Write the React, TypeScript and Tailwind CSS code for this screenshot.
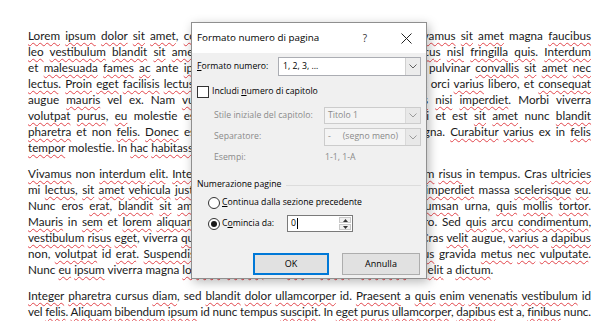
import { Fragment } from 'react';

// words Word's checker did not flag
const known = new Set([
  'et', 'ante', 'in', 'non', 'est', 'ex', 'a', 'magna', 'libero', 'orci', 'morbi', 'viverra',
  'nunc', 'molestie', 'nam', 'id', 'mi', 'eros', 'massa', 'urna', 'gravida', 'sed', 'pulvinar',
  'cursus', 'tempus', 'cras', 'augue', 'ut', 'at', 'vel',
]);

// each line: [text, tight?]
const paragraphs: [string, boolean?][][] = [
  [
    ['Lorem ipsum dolor sit amet, consectetur adipiscing elit. Etiam eu urna. Vivamus sit amet magna faucibus'],
    ['leo vestibulum blandit sit amet nec neque. Aenean vel tortor eget rhoncus nisl fringilla quis. Interdum'],
    ['et malesuada fames ac ante ipsum primis in faucibus. Phasellus ut mi est pulvinar convallis sit amet nec'],
    ['lectus. Proin eget facilisis lectus. Maecenas at ultrices turpis, ut dignissim sit orci varius libero, et consequat'],
    ['augue mauris vel ex. Nam vulputate, elit in efficitur lacinia, a dui risus nisi imperdiet. Morbi viverra'],
    ['volutpat purus, eu molestie est ultrices sed. Etiam tincidunt ligula, morbi et est sit amet nunc blandit'],
    ['pharetra et non felis. Donec est lacus, hendrerit in tincidunt et, mollis magna. Curabitur varius ex in felis'],
    ['tempor molestie. In hac habitasse platea dictumst.'],
  ],
  [
    ['Vivamus non interdum elit. Integer sit amet nisl et lorem dictum, ut bibendum risus in tempus. Cras ultricies'],
    ['mi lectus, sit amet vehicula justo ut nibh. Nam eget tellus nec, a porta nisl imperdiet massa scelerisque eu.'],
    ['Nunc eros erat, blandit sit amet dictum vel, placerat at ipsum. Nulla accumsan urna, quis mollis tortor.'],
    ['Mauris in sem et lorem aliquam laoreet. Aliquam erat volutpat. Ut nec libero. Sed quis arcu condimentum,'],
    ['vestibulum risus eget, viverra quam. Fusce sed lorem sit amet nunc pretium. Cras velit augue, varius a dapibus'],
    ['non, volutpat id erat. Suspendisse potenti. Vestibulum at nisi ac nisl faucibus gravida metus nec vulputate.'],
    ['Nunc eu ipsum viverra magna lobortis. Integer sed nisl at lorem a tincidunt vel elit a dictum.'],
  ],
  [
    ['Integer pharetra cursus diam, sed blandit dolor ullamcorper id. Praesent a quis enim venenatis vestibulum id'],
    ['vel felis. Aliquam bibendum ipsum id nunc tempus suscipit. In eget purus ullamcorper, dapibus est a, finibus nunc.', true],
  ],
];

function Word({ w }: { w: string }) {
  const m = w.match(/^([A-Za-z]+)(.*)$/);
  if (!m || known.has(m[1].toLowerCase())) return <>{w}</>;
  return (
    <>
      <span className="underline decoration-wavy decoration-[#e2454b] decoration-[1.2px] underline-offset-[2px]">{m[1]}</span>
      {m[2]}
    </>
  );
}

function Line({ text, last, tight }: { text: string; last: boolean; tight?: boolean }) {
  let cls = 'h-4 text-justify [text-align-last:justify]';
  if (last) cls = 'h-4 whitespace-nowrap';
  if (tight) cls += ' tracking-[-0.1px] [word-spacing:-1.5px]';
  return (
    <div className={cls}>
      {text.split(' ').map((w, i) => (
        <Fragment key={i}>
          {i > 0 && ' '}
          <Word w={w} />
        </Fragment>
      ))}
    </div>
  );
}

function Chevron({ color = '#606060' }: { color?: string }) {
  return (
    <svg width="8" height="5" viewBox="0 0 8 5" fill="none">
      <path d="M0.5 0.5 L4 4 L7.5 0.5" stroke={color} strokeWidth="1" />
    </svg>
  );
}

function Select({ value, disabled, w }: { value: React.ReactNode; disabled?: boolean; w: string }) {
  return (
    <div
      className={`${w} flex h-full items-stretch border ${
        disabled ? 'border-[#cccccc] bg-[#f4f4f4] text-[#8a8a8a]' : 'border-[#abadb3] bg-white'
      }`}
    >
      <div className="flex flex-1 items-center pl-[3px]">{value}</div>
      <div
        className={`flex w-[15px] items-center justify-center border-l ${
          disabled ? 'border-[#d9d9d9] bg-[#e8e8e8]' : 'border-[#d0d0d0] bg-[#ececec]'
        }`}
      >
        <Chevron color={disabled ? '#9a9a9a' : '#606060'} />
      </div>
    </div>
  );
}

function Radio({ checked }: { checked?: boolean }) {
  return (
    <span className="flex h-[12px] w-[12px] items-center justify-center rounded-full border border-[#333] bg-white">
      {checked && <span className="h-[6px] w-[6px] rounded-full bg-[#1a1a1a]" />}
    </span>
  );
}

function PageNumberDialog() {
  return (
    <div className="absolute left-[191px] top-[22px] flex h-[257px] w-[236px] flex-col border border-[#8f8f8f] bg-[#f0f0f0] font-['Open_Sans',sans-serif] text-[8.7px] text-black shadow-[2px_3px_10px_rgba(0,0,0,0.28)]">
      {/* Title bar */}
      <div className="flex h-[30px] shrink-0 items-center bg-white pl-[5px]">
        <span className="text-[9.8px]">Formato numero di pagina</span>
        <span className="ml-auto mr-[16px] w-[20px] text-center text-[10px] text-[#333]">?</span>
        <span className="mr-[5px] flex w-[30px] justify-center">
          <svg width="11" height="11" viewBox="0 0 11 11">
            <path d="M0.5 0.5 L10.5 10.5 M10.5 0.5 L0.5 10.5" stroke="#222" strokeWidth="1" />
          </svg>
        </span>
      </div>

      <div className="flex flex-col px-[5px]">
        {/* Formato numero */}
        <div className="mt-[4px] flex h-[19px] items-center">
          <span className="w-[81px]">
            <span className="underline">F</span>ormato numero:
          </span>
          <Select w="w-[143px]" value={<span className="pl-[1px]">1, 2, 3, …</span>} />
        </div>

        {/* Includi numero di capitolo */}
        <div className="mt-[8px] flex h-[16px] items-center gap-[3px]">
          <span className="h-[12px] w-[12px] border border-[#333] bg-white" />
          <span>
            Includi <span className="underline">n</span>umero di capitolo
          </span>
        </div>

        <div className="text-[#8a8a8a]">
          <div className="mt-[7px] flex h-[17px] items-center pl-[17px]">
            <span className="w-[110px]">Stile iniziale del capitolo:</span>
            <Select disabled w="w-[97px]" value="Titolo 1" />
          </div>
          <div className="mt-[4px] flex h-[18px] items-center pl-[17px]">
            <span className="w-[110px]">Separatore:</span>
            <Select
              disabled
              w="w-[97px]"
              value={
                <span className="flex gap-[12px]">
                  <span>-</span>
                  <span>(segno meno)</span>
                </span>
              }
            />
          </div>
          <div className="mt-[4px] flex h-[16px] items-center pl-[17px]">
            <span className="w-[111px]">Esempi:</span>
            <span>1-1, 1-A</span>
          </div>
        </div>

        {/* Numerazione pagine */}
        <div className="mt-[11px] flex h-[16px] items-center gap-[5px]">
          <span>Numerazione pagine</span>
          <span className="h-px flex-1 bg-[#dcdcdc]" />
        </div>

        <div className="mt-[2px] flex h-[16px] items-center gap-[2px] pl-[11px]">
          <Radio />
          <span>
            <span className="underline">C</span>ontinua dalla sezione precedente
          </span>
        </div>

        <div className="mt-[4px] flex h-[17px] items-center pl-[11px]">
          <Radio checked />
          <span className="ml-[2px] w-[65px]">
            C<span className="underline">o</span>mincia da:
          </span>
          <div className="flex h-full w-[66px] border border-[#7a7a7a] bg-white">
            <div className="flex flex-1 items-center pl-[3px]">
              0<span className="ml-px h-[11px] w-px bg-black" />
            </div>
            <div className="flex w-[14px] flex-col gap-px p-px">
              <span className="flex flex-1 items-center justify-center border border-[#c8c8c8] bg-[#f0f0f0]">
                <svg width="5" height="3" viewBox="0 0 5 3">
                  <path d="M0 3 L2.5 0 L5 3 Z" fill="#333" />
                </svg>
              </span>
              <span className="flex flex-1 items-center justify-center border border-[#c8c8c8] bg-[#f0f0f0]">
                <svg width="5" height="3" viewBox="0 0 5 3">
                  <path d="M0 0 L2.5 3 L5 0 Z" fill="#333" />
                </svg>
              </span>
            </div>
          </div>
        </div>

        {/* Buttons */}
        <div className="mt-[21px] flex h-[22px] justify-end gap-[13px] pr-[1px]">
          <button className="w-[76px] border border-[#0078d7] bg-[#e1e1e1] text-[9px] shadow-[inset_0_0_0_1px_#0078d7]">OK</button>
          <button className="w-[78px] border border-[#adadad] bg-[#e1e1e1] text-[9px]">Annulla</button>
        </div>
      </div>
    </div>
  );
}

export default function App() {
  return (
    <div className="relative h-[321px] w-[610px] overflow-hidden bg-white">
      <div className="w-[591px] pl-[28px] pt-[27px] font-['Lato',sans-serif] text-[11.7px] leading-4 text-[#1a1a1a]">
        {paragraphs.map((p, pi) => (
          <div key={pi} className="mb-[10px]">
            {p.map(([line, tight], li) => (
              <Line key={li} text={line} tight={tight} last={pi < 2 && li === p.length - 1} />
            ))}
          </div>
        ))}
      </div>
      <PageNumberDialog />
    </div>
  );
}
